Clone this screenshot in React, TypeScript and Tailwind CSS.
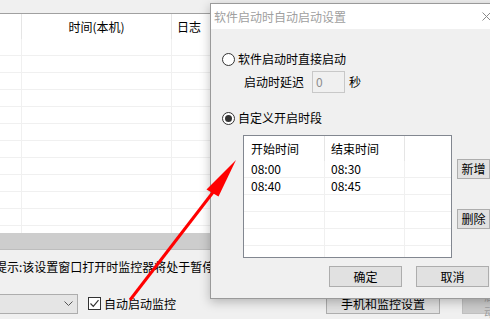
import React from "react";

const mainRows = Array.from({ length: 12 });
const listRows = [
  { start: "08:00", end: "08:30" },
  { start: "08:40", end: "08:45" },
  { start: "", end: "" },
  { start: "", end: "" },
  { start: "", end: "" },
  { start: "", end: "" },
];

function Radio({ checked }: { checked?: boolean }) {
  return (
    <span className="flex h-[13px] w-[13px] shrink-0 items-center justify-center rounded-full border border-[#333] bg-white">
      {checked && <span className="h-[7px] w-[7px] rounded-full bg-[#333]" />}
    </span>
  );
}

function WinButton({ children, className = "" }: { children: React.ReactNode; className?: string }) {
  return (
    <div
      className={`flex items-center justify-center border border-[#adadad] bg-[#e1e1e1] ${className}`}
    >
      {children}
    </div>
  );
}

export default function App() {
  return (
    <div className="relative h-[319px] w-[490px] overflow-hidden bg-[#f0f0f0] font-['Noto_Sans_CJK_SC',sans-serif] text-[12px] leading-[16px] text-black">
      {/* main window behind */}
      <div className="h-[14px] border-b border-[#a0a0a0]" />
      <div className="flex h-[25px] bg-white">
        <div className="w-[22px] border-r border-[#e5e5e5]" />
        <div className="flex w-[150px] items-center justify-center border-r border-[#e5e5e5]">
          时间(本机)
        </div>
        <div className="flex flex-1 items-center pl-[5px]">日志</div>
      </div>
      <div className="h-[194px] overflow-hidden bg-white">
        {mainRows.map((_, i) => (
          <div key={i} className="flex h-[17px] border-b border-[#f0f0f0]">
            <div className="w-[22px] border-r border-[#f0f0f0]" />
            <div className="w-[150px] border-r border-[#f0f0f0]" />
          </div>
        ))}
      </div>
      <div className="h-[17px] border-b border-[#bdbdbd] bg-[#cdcdcd]" />

      <div className="ml-[-5px] mt-[9px] whitespace-nowrap">
        提示:该设置窗口打开时监控器将处于暂停
      </div>

      <div className="mt-[18px] flex items-center">
        <div className="ml-[-1px] flex h-[20px] w-[79px] items-center justify-end border border-[#adadad] bg-[#e5e5e5] pr-[4px]">
          <svg width="9" height="5" viewBox="0 0 9 5">
            <path d="M0.5 0.5 L4.5 4.5 L8.5 0.5" fill="none" stroke="#555" strokeWidth="1" />
          </svg>
        </div>
        <span className="ml-[10px] flex h-[13px] w-[13px] items-center justify-center border border-[#333] bg-white">
          <svg width="11" height="11" viewBox="0 0 11 11">
            <path d="M1.5 5.5 L4.3 8.3 L9.5 2.2" fill="none" stroke="#333" strokeWidth="1.2" />
          </svg>
        </span>
        <span className="ml-[3px]">自动启动监控</span>
        <WinButton className="ml-auto h-[21px] w-[114px]">手机和监控设置</WinButton>
        <div className="ml-[22px] mr-[-12px] flex h-[21px] w-[40px] items-center border border-[#bfbfbf] bg-[#cccccc] pl-[21px] text-[#a0a0a0]">
          启动
        </div>
      </div>

      {/* dialog */}
      <div className="absolute left-[210px] top-[3px] flex h-[296px] w-[292px] flex-col border border-[#9a9a9a] bg-[#f0f0f0] shadow-[0_3px_10px_rgba(0,0,0,0.25)]">
        <div className="flex h-[25px] items-center justify-between bg-white pl-[3px] pr-[10px] text-[#a0a0a0]">
          <span>软件启动时自动启动设置</span>
          <svg width="9" height="9" viewBox="0 0 9 9">
            <path d="M0.5 0.5 L8.5 8.5 M8.5 0.5 L0.5 8.5" stroke="#8a8a8a" strokeWidth="1" />
          </svg>
        </div>

        <div className="flex flex-col pl-[11px]">
          <div className="mt-[22px] flex h-[16px] items-center">
            <Radio />
            <span className="ml-[3px]">软件启动时直接启动</span>
          </div>

          <div className="mt-[4px] flex h-[22px] items-center pl-[22px]">
            <span>启动时延迟</span>
            <div className="ml-[8px] h-[22px] w-[33px] border border-[#c8c8c8] bg-[#f0f0f0] pl-[3px] pt-[2px] text-[#8c8c8c]">
              0
            </div>
            <span className="ml-[4px]">秒</span>
          </div>

          <div className="mt-[17px] flex h-[16px] items-center">
            <Radio checked />
            <span className="ml-[3px]">自定义开启时段</span>
          </div>

          <div className="mt-[9px] flex">
            <div className="ml-[21px] h-[123px] w-[209px] overflow-hidden border border-[#828790] bg-white">
              <div className="flex h-[25px]">
                <div className="flex w-[81px] items-center border-r border-[#e5e5e5] pl-[7px]">开始时间</div>
                <div className="flex w-[80px] items-center border-r border-[#e5e5e5] pl-[6px]">结束时间</div>
              </div>
              {listRows.map((row, i) => (
                <div key={i} className="flex h-[17px] border-b border-[#f0f0f0]">
                  <div className="flex w-[81px] items-center border-r border-[#f0f0f0] pl-[7px]">{row.start}</div>
                  <div className="flex w-[80px] items-center border-r border-[#f0f0f0] pl-[6px]">{row.end}</div>
                </div>
              ))}
            </div>
            <div className="ml-[5px] flex flex-col">
              <WinButton className="mt-[24px] h-[20px] w-[33px]">新增</WinButton>
              <WinButton className="mt-[30px] h-[20px] w-[33px]">删除</WinButton>
            </div>
          </div>

          <div className="mt-[8px] flex">
            <WinButton className="ml-[107px] h-[21px] w-[73px]">确定</WinButton>
            <WinButton className="ml-[14px] h-[21px] w-[73px]">取消</WinButton>
          </div>
        </div>
      </div>

      {/* red annotation arrow */}
      <svg className="pointer-events-none absolute left-0 top-0" width="490" height="319" viewBox="0 0 490 319">
        <line x1="130" y1="300" x2="214" y2="191" stroke="#ff0000" strokeWidth="3" />
        <polygon points="236,160 206.5,189.5 218.5,196.5" fill="#ff0000" />
      </svg>
    </div>
  );
}
